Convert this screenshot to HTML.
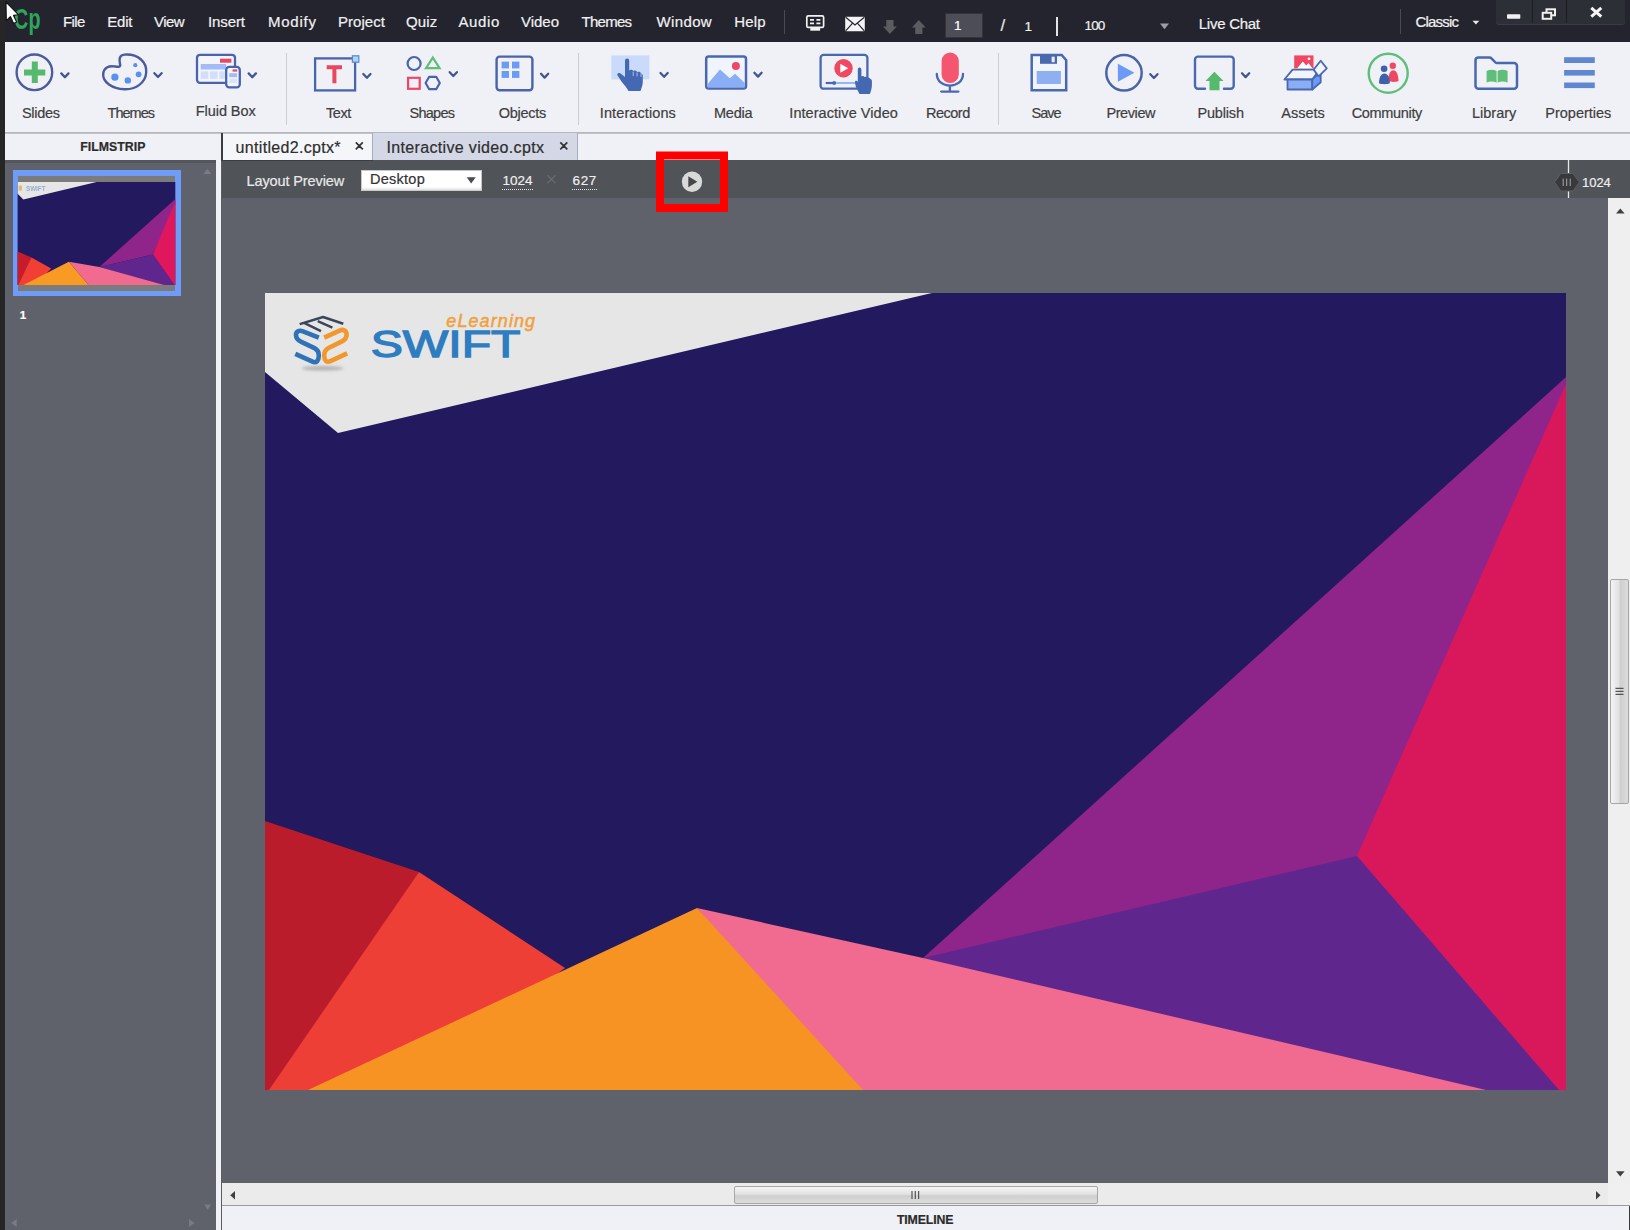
<!DOCTYPE html>
<html><head><meta charset="utf-8"><title>Adobe Captivate - Interactive video.cptx</title>
<style>
html,body{margin:0;padding:0;}
body{width:1630px;height:1230px;position:relative;overflow:hidden;background:#5f626b;font-family:"Liberation Sans","DejaVu Sans",sans-serif;}
.abs{position:absolute;}
.t{position:absolute;white-space:nowrap;line-height:1;-webkit-text-stroke:0.2px;}
svg{position:absolute;overflow:visible;}
#leftstrip{left:0;top:0;width:5px;height:1230px;background:#262626;}
#menubar{left:5px;top:0;width:1625px;height:42px;background:#23242d;}
#toolbar{left:5px;top:42px;width:1625px;height:90px;background:#f0f1f6;}
.tsep{position:absolute;top:53px;width:1px;height:72px;background:#cdced3;}
#tabbar{left:5px;top:134px;width:1625px;height:26px;background:#f0f1f6;}
#tbline{left:5px;top:132px;width:1625px;height:2px;background:linear-gradient(#aeb0b4,#c9cacf);}
#film{left:5px;top:160px;width:211px;height:1070px;background:#5f626b;}
#divider{left:216px;top:160px;width:6px;height:1070px;background:linear-gradient(90deg,#f1f2f7 0,#f1f2f7 5.3px,#5a5d64 5.3px);}
#lpbar{left:222px;top:160px;width:1408px;height:38px;background:#505357;}
#canvas{left:222px;top:198px;width:1386px;height:985px;background:#5f626b;}
#vscroll{left:1608px;top:198px;width:22px;height:985px;background:#efefef;}
#hscroll{left:222px;top:1183px;width:1386px;height:22px;background:#ebebeb;}
#corner{left:1608px;top:1183px;width:22px;height:22px;background:#f0f0f0;}
#timeline{left:222px;top:1206px;width:1408px;height:24px;background:#f0f1f6;}
#tlline{left:222px;top:1205px;width:1408px;height:1px;background:#9a9a9a;}
</style></head><body>
<div id="leftstrip" class="abs"></div>
<div id="menubar" class="abs"></div>
<div id="toolbar" class="abs"></div>
<div id="tbline" class="abs"></div>
<div id="tabbar" class="abs"></div>
<div id="film" class="abs"></div>
<div id="divider" class="abs"></div>
<div id="lpbar" class="abs"></div>
<div id="canvas" class="abs"></div>
<div id="vscroll" class="abs"></div>
<div id="hscroll" class="abs"></div>
<div id="corner" class="abs"></div>
<div id="tlline" class="abs"></div>
<div id="timeline" class="abs"></div>
<!-- SLIDE -->
<svg style="left:265px;top:293px" width="1301" height="797" viewBox="265 293 1301 797">
<defs><g id="slideart">
<rect x="265" y="293" width="1301" height="797" fill="#23195e"/>
<polygon points="265,293 932,293 338,433 265,372" fill="#e6e6e6"/>
<polygon points="923,958 1566,377 1566,395 1362,870 935,966" fill="#8f248a"/>
<polygon points="1566,384 1566,1090 1545,1090 1350,864 1357,856" fill="#d9185c"/>
<polygon points="923,958 1357,856 1559,1090 1470,1090 915,963" fill="#5f278e"/>
<polygon points="697,908 923,958 1486,1090 840,1090" fill="#f06b8f"/>
<polygon points="265,821 419,872 300,1090 265,1090" fill="#bb1c2c"/>
<polygon points="419,872 565,968 400,1090 269,1090" fill="#ee3f36"/>
<polygon points="697,908 863,1090 308,1090" fill="#f69323"/>
</g></defs>
<use href="#slideart"/>
</svg>
<!-- MENU BAR -->
<span class="t" style="left:13.5px;top:4.6px;font-size:29px;font-weight:700;color:#2fa45c;transform-origin:0 0;transform:scaleX(0.68);letter-spacing:0.5px;">Cp</span>
<div class="abs" style="left:945px;top:13px;width:38px;height:25px;background:#4c4d57;border:1px solid #33343b;box-sizing:border-box;"></div>
<div class="abs" style="left:1056px;top:17px;width:2px;height:19px;background:#e4e4e4;"></div>
<div class="abs" style="left:784px;top:10px;width:1px;height:24px;background:#4a4b52;"></div>
<div class="abs" style="left:1400px;top:9px;width:1px;height:25px;background:#4a4b52;"></div>
<div class="abs" style="left:1496px;top:0;width:129px;height:24px;background:#2d2f36;border-radius:0 0 3px 3px;box-shadow:0 1px 0 #3a3c44;"></div>
<div class="abs" style="left:1532px;top:0;width:1px;height:23px;background:#1c1d22;"></div>
<div class="abs" style="left:1566px;top:0;width:1px;height:23px;background:#1c1d22;"></div>
<svg style="left:0;top:0" width="1630" height="42" viewBox="0 0 1630 42">
<!-- cursor -->
<path d="M6,2.200 L6.300,20.600 L10.400,16.600 L13.600,23.400 L16.600,22 L13.500,15.400 L18.600,14.800 Z" fill="#ffffff" stroke="#111" stroke-width="1.100" stroke-linejoin="round"/>
<!-- monitor icon -->
<rect x="806.800" y="15.800" width="16.800" height="11.600" rx="1.500" fill="none" stroke="#f1f1f1" stroke-width="1.700"/>
<path d="M810,19.800H814M816.400,19.800H820.400M810,23.300H814M816.400,23.300H820.400" stroke="#f1f1f1" stroke-width="1.700"/>
<rect x="810.300" y="28" width="9.800" height="2.700" fill="#f1f1f1"/>
<!-- envelope -->
<rect x="845.200" y="16.700" width="19.600" height="14.600" rx="1" fill="#f4f4f4"/>
<path d="M845.700,17.300 L855,25 L864.300,17.300 M845.700,30.800 L852.400,23.400 M864.300,30.800 L857.600,23.400" fill="none" stroke="#23242d" stroke-width="1.200"/>
<!-- arrows -->
<path d="M886.300,20 H893.500 V26.500 H896.800 L889.900,34 L883,26.500 H886.300 Z" fill="#5b5c61"/>
<path d="M915.200,34 H922.400 V27.500 H925.700 L918.800,20 L911.900,27.500 H915.200 Z" fill="#5b5c61"/>
<path d="M1160,23.500 H1169 L1164.500,29.200 Z" fill="#9d9ea3"/>
<path d="M1472.500,20.800 H1479.300 L1475.900,24.500 Z" fill="#e8e8e8"/>
<!-- window buttons -->
<rect x="1507" y="14.300" width="13.300" height="4.500" rx="0.800" fill="#f1f1f1"/>
<g fill="none" stroke="#f1f1f1" stroke-width="2"><rect x="1546.500" y="9.300" width="8.500" height="6"/><rect x="1542.700" y="12.800" width="8.500" height="6" fill="#2c2e35"/></g>
<path d="M1591.300,7.800 L1601.300,16.600 M1601.300,7.800 L1591.300,16.600" stroke="#f4f4f4" stroke-width="3"/>
</svg>
<!-- TOOLBAR ICONS -->
<div class="tsep" style="left:286px"></div>
<div class="tsep" style="left:578px"></div>
<div class="tsep" style="left:998px"></div>
<svg style="left:0;top:42px" width="1630" height="90" viewBox="0 42 1630 90" fill="none" stroke-linecap="round" stroke-linejoin="round">
<defs><path id="chev" d="M-3.6,-2 L0,1.8 L3.6,-2" stroke="#44558f" stroke-width="2.3" fill="none"/></defs>
<!-- Slides -->
<circle cx="34.4" cy="72.3" r="17.8" stroke="#4b5c9c" stroke-width="2.4"/>
<path d="M24,72.4H45.3M34.8,61.6V83.1" stroke="#55ba6d" stroke-width="6" stroke-linecap="butt"/>
<use href="#chev" x="64.9" y="75.4"/>
<!-- Themes -->
<path d="M124.5,54.6 C138,53.6 147,62 146.2,72.5 C145.4,83.5 135,89.6 124.5,89.2 C112,88.7 102.6,82 103.2,74 C103.7,67.5 109,65.8 114,66.4 C117.5,66.8 120.5,67.5 120.2,65 C119.8,62 117.5,55.3 124.5,54.6Z" stroke="#4b5c9c" stroke-width="2.4"/>
<g fill="#5b8ff0" stroke="none"><circle cx="135.3" cy="65.2" r="2.1"/><circle cx="138.6" cy="74.3" r="2.9"/><circle cx="127.8" cy="80.4" r="3.2"/><circle cx="114.9" cy="77.2" r="3.6"/></g>
<use href="#chev" x="158" y="75.2"/>
<!-- Fluid Box -->
<rect x="197" y="54.8" width="38" height="28" rx="3" stroke="#4a63aa" stroke-width="2.3" fill="#f3f5fc"/>
<rect x="220" y="58.7" width="11.4" height="4" fill="#ea4660" stroke="none"/>
<rect x="200.7" y="64" width="25.5" height="5.5" fill="#a3bcf6" stroke="none"/>
<g fill="#d3defa" stroke="none"><rect x="200.7" y="71.4" width="7.6" height="7.4"/><rect x="210" y="71.4" width="7.6" height="7.4"/><rect x="219.3" y="71.4" width="6" height="7.4"/></g>
<rect x="226.2" y="66.9" width="13.6" height="20.4" rx="3" stroke="#4a63aa" stroke-width="2.3" fill="#f3f5fc"/>
<rect x="232.6" y="69.4" width="4.6" height="2.2" fill="#ea4660" stroke="none"/>
<rect x="229.2" y="73.2" width="7.9" height="4" fill="#a3bcf6" stroke="none"/>
<rect x="229.2" y="78.6" width="7.9" height="4.5" fill="#dbe4fa" stroke="none"/>
<use href="#chev" x="252.3" y="75.4"/>
<!-- Text -->
<rect x="315.1" y="58.4" width="40" height="32" stroke="#4a63aa" stroke-width="2.3" stroke-linejoin="miter"/>
<rect x="352.4" y="55.8" width="6.4" height="6.4" fill="#a9d5f6" stroke="#5c86c6" stroke-width="1.2" stroke-linejoin="miter"/>
<path d="M326.7,67.2H342M334.4,67.2V83.3" stroke="#ea4660" stroke-width="4" stroke-linecap="butt"/>
<use href="#chev" x="366.9" y="76"/>
<!-- Shapes -->
<circle cx="414.1" cy="63.5" r="6.5" stroke="#4a63aa" stroke-width="2.2"/>
<path d="M432.8,57.6 L439.6,68.2 H426 Z" stroke="#5fbe7a" stroke-width="2.2" stroke-linejoin="miter"/>
<rect x="408.1" y="77.8" width="11.6" height="11" stroke="#ee4668" stroke-width="2.2" stroke-linejoin="miter"/>
<path d="M425.6,83 L429.2,76.8 H436.2 L439.8,83 L436.2,89.2 H429.2 Z" stroke="#4a63aa" stroke-width="2.2"/>
<use href="#chev" x="453.3" y="74.2"/>
<!-- Objects -->
<rect x="496.6" y="56.6" width="35.8" height="33.6" rx="3" stroke="#4a63aa" stroke-width="2.4"/>
<g fill="#6b9bf6" stroke="none"><rect x="501.6" y="61.6" width="7.4" height="6.8"/><rect x="512" y="61.6" width="7.4" height="6.8"/><rect x="501.6" y="71" width="7.4" height="6.9"/><rect x="512" y="71" width="7.4" height="6.9"/></g>
<use href="#chev" x="544.6" y="75.8"/>
<!-- Interactions -->
<rect x="611.4" y="55.4" width="38" height="24" fill="#c9dafa" stroke="none"/>
<path d="M625,60.5 a2.1,2.1 0 0 1 4.2,0 V70.5 c1.2,-1.2 3.4,-1 4,0.6 c1.2,-1 3.4,-0.6 3.9,1 c1.3,-0.9 3.6,-0.3 3.9,1.5 c1,0.2 1.8,1 1.8,2.4 V81.5 c0,4.5 -1.5,6.5 -2.3,9.5 H628.5 c-1.5,-3.2 -4.5,-6 -7,-9.5 L617.6,75.6 c-1,-1.6 0.6,-3.4 2.6,-2.4 L625,77 Z" fill="#4469b2" stroke="none"/>
<path d="M633.2,71.6 V76 M637.1,72.4 V76.4 M641,73.4 V77" stroke="#c4d4f4" stroke-width="0.8" stroke-linecap="butt"/>
<use href="#chev" x="664.1" y="75"/>
<!-- Media -->
<rect x="706.2" y="56.6" width="39.8" height="32" rx="2.5" stroke="#4a68b0" stroke-width="2.5" fill="#f0f4fd"/>
<path d="M707.6,87.4 V84 L720,69.5 L729.8,78.3 L735,73.8 L744.8,83 V87.4 Z" fill="#8aaef6" stroke="none"/>
<circle cx="735.9" cy="65.9" r="4" fill="#ee4668" stroke="none"/>
<use href="#chev" x="758" y="74.8"/>
<!-- Interactive Video -->
<rect x="820.6" y="54.9" width="46.8" height="33.8" rx="3" stroke="#4a68b0" stroke-width="2.3"/>
<circle cx="843.5" cy="68.3" r="9.2" fill="#ee4862" stroke="none"/>
<path d="M840.3,63.8 L848.3,68.3 L840.3,72.8 Z" fill="#ffffff" stroke="none"/>
<path d="M835,83 H856" stroke="#8aaef6" stroke-width="1.8" stroke-linecap="butt"/>
<path d="M825.7,83 H834" stroke="#4a68b0" stroke-width="2.2" stroke-linecap="butt"/>
<circle cx="834.2" cy="83" r="1.9" fill="#4a68b0" stroke="none"/>
<path d="M857.8,69.4 a1.8,1.8 0 0 1 3.6,0 V76.5 c1,-0.8 2.6,-0.6 3.1,0.6 c1,-0.7 2.6,-0.4 3,0.8 c1,-0.6 2.7,-0.1 3,1.2 c0.8,0.2 1.4,0.9 1.4,2 V85 c0,4 -1.2,6 -2,9 H859.5 c-1,-2.6 -2.7,-4.6 -3.8,-7.8 L855,82.5 c-0.3,-1.4 1.2,-2.2 2.2,-1.2 L857.8,82 Z" fill="#4469b2" stroke="none"/>
<!-- Record -->
<rect x="941.6" y="52.4" width="17.2" height="30.6" rx="8.6" fill="#f5566f" stroke="none"/>
<path d="M936.8,74 c0,15.4 26.2,15.4 26.2,0 M949.9,85.6 V91.5 M941.2,91.6 H958.4" stroke="#4a68b0" stroke-width="2.3"/>
<!-- Save -->
<path d="M1031.7,55 H1061.7 L1066.2,60.3 V90.2 H1031.7 Z" stroke="#4a68b0" stroke-width="2.5" fill="#f0f4fd" stroke-linejoin="miter"/>
<rect x="1040" y="55" width="17" height="8.8" fill="#4a68b0" stroke="none"/>
<rect x="1051.6" y="56.7" width="3.1" height="5.5" fill="#e8eefb" stroke="none"/>
<rect x="1036.7" y="71" width="24.2" height="13" fill="#8eaff0" stroke="none"/>
<!-- Preview -->
<circle cx="1124" cy="72.8" r="17.7" stroke="#4b64a8" stroke-width="2.5"/>
<path d="M1117.9,63.7 L1134.4,72.7 L1117.9,81.8 Z" fill="#6b9bf6" stroke="none"/>
<use href="#chev" x="1153.9" y="76.2"/>
<!-- Publish -->
<path d="M1205,88.7 H1198 a3,3 0 0 1 -3,-3 V59.6 a3,3 0 0 1 3,-3 H1230.700 a3,3 0 0 1 3,3 V85.700 a3,3 0 0 1 -3,3 H1224" stroke="#4a68b0" stroke-width="2.4"/>
<path d="M1214.4,71.8 L1223.500,81 H1219.500 V90.300 H1209.500 V81 H1205.500 Z" fill="#55ba6d" stroke="none"/>
<use href="#chev" x="1245.6" y="75.3"/>
<!-- Assets -->
<rect x="1294.2" y="55.4" width="19.3" height="13" fill="#ee4862" stroke="none"/>
<path d="M1297,68.4 L1302.8,61.5 L1306.2,65.5 L1308.5,63 L1312.5,68.4 Z" fill="#ffffff" stroke="none"/>
<circle cx="1309" cy="58.8" r="1.4" fill="#ffffff" stroke="none"/>
<path d="M1284.4,79.5 L1292.6,69.6 H1319.5 L1312.3,79.5 Z" fill="#f0f4fd" stroke="#4a68b0" stroke-width="1.8"/>
<path d="M1287.5,79.5 H1312.3 V89.5 H1287.5 Z" fill="#8aaef6" stroke="#4a68b0" stroke-width="1.8"/>
<path d="M1312.3,79.5 L1320.7,71.5 V82.3 L1312.3,89.5 Z" fill="#6b9bf6" stroke="#4a68b0" stroke-width="1.8"/>
<path d="M1313.6,69.6 L1320.7,60.8 L1326.8,68.4 L1318.6,76.4 Z" fill="#f0f4fd" stroke="#4a68b0" stroke-width="1.8"/>
<!-- Community -->
<circle cx="1388.200" cy="73.200" r="19.500" stroke="#5fbe7a" stroke-width="2.400"/>
<g fill="#ee4862" stroke="none"><circle cx="1392.800" cy="65.700" r="3.200"/><path d="M1388.200,81 c0,-6 2,-10.700 5.100,-10.700 c3.200,0 5.200,4.700 5.200,10.700 c-2.500,1.200 -7.800,1.200 -10.300,0 Z"/></g>
<g fill="#3f60aa" stroke="none"><circle cx="1384.100" cy="68.800" r="3.300"/><path d="M1379,83.300 c0,-6 2,-9.900 5.400,-9.900 c3.400,0 5.400,3.900 5.400,9.900 c-2.500,1.200 -8.300,1.200 -10.800,0 Z"/></g>
<!-- Library -->
<path d="M1478,57.600 H1489.500 a3,3 0 0 1 2.200,1 L1495.500,62.500 a2,2 0 0 0 1.500,0.600 H1514 a3,3 0 0 1 3,3 V85.700 a3,3 0 0 1 -3,3 H1478.500 a3,3 0 0 1 -3,-3 V60.600 a3,3 0 0 1 2.500,-3 Z" stroke="#4a68b0" stroke-width="2.500"/>
<path d="M1486.600,71 c3,-1.600 7,-1.600 10,0 V82.500 c-3,-1.300 -7,-1.300 -10,0 Z M1497.600,71 c3,-1.600 7,-1.600 10,0 V82.500 c-3,-1.300 -7,-1.300 -10,0 Z" fill="#5fbe7a" stroke="none"/>
<!-- Properties -->
<g fill="#6088d2" stroke="none"><rect x="1564.100" y="57.200" width="30.700" height="5.800"/><rect x="1564.100" y="70" width="30.700" height="5.600"/><rect x="1564.100" y="82.500" width="30.700" height="5.600"/></g>
</svg>
<!-- TABS -->
<div class="abs" style="left:221px;top:133px;width:2px;height:28px;background:#3c3d42;"></div>
<div class="abs" style="left:223px;top:134px;width:149px;height:26px;background:#f5f6fa;"></div>
<div class="abs" style="left:221px;top:159.500px;width:152px;height:1.500px;background:#3c3d42;"></div>
<div class="abs" style="left:372px;top:133px;width:1px;height:27px;background:#a9adbb;"></div>
<div class="abs" style="left:373px;top:133px;width:204px;height:27px;background:#d3d7e6;"></div>
<div class="abs" style="left:577px;top:133px;width:1px;height:27px;background:#a9adbb;"></div>
<svg style="left:0;top:133px" width="700" height="27" viewBox="0 133 700 27">
<path d="M355.800,142.300 L362.800,149.300 M362.800,142.300 L355.800,149.300 M560.300,142.300 L567.300,149.300 M567.300,142.300 L560.300,149.300" stroke="#333" stroke-width="1.700"/>
</svg>
<!-- FILMSTRIP -->
<div class="abs" style="left:5px;top:160px;width:211px;height:3px;background:#54565d;"></div>
<div class="abs" style="left:13px;top:170px;width:168px;height:126px;background:#6f9cf6;"></div>
<div class="abs" style="left:18px;top:176px;width:157px;height:115px;background:#7b7b7b;"></div>
<svg style="left:0;top:160px" width="222" height="140" viewBox="0 160 222 140">
<rect x="17.6" y="182" width="157.7" height="103" fill="#23195e"/>
<polygon points="17.6,182 96.6,182 23.4,199.6 17.6,193.8" fill="#e6e6e6"/>
<polygon points="99.5,266.9 175.3,198.9 175.3,205 152.9,254.5" fill="#8f248a"/>
<polygon points="175.3,201 175.3,285 174.3,285 152.9,254.5" fill="#e0175c"/>
<polygon points="99.5,266.9 152.9,254.500 174.500,285 163,285" fill="#5f278e"/>
<polygon points="68.8,261.8 99.5,266.9 164,285 88.5,285" fill="#f06b8f"/>
<polygon points="17.6,251.6 31.5,257.4 22,285 17.6,285" fill="#c61c2c"/>
<polygon points="31.5,257.4 51.2,268.4 35,285 18.4,285" fill="#f23f36"/>
<polygon points="68.8,261.8 88.5,285 23.4,285" fill="#f89a23"/>
<rect x="18.6" y="185.6" width="3.4" height="5" fill="#d9b36a" opacity="0.85"/>
<text x="26" y="190.800" font-family="'Liberation Sans',sans-serif" font-size="6.500" font-weight="700" fill="#8aa8c8" textLength="19.500" lengthAdjust="spacingAndGlyphs" opacity="0.9">SWIFT</text>
</svg>
<svg style="left:0;top:160px" width="222" height="1070" viewBox="0 160 222 1070">
<path d="M203.400,174 L207.400,169 L211.400,174 Z" fill="#7a7d86"/>
<path d="M204.400,1204.600 H211 L207.700,1210 Z" fill="#787b86"/>
<path d="M16.700,1219 V1227 L11,1223 Z" fill="#787b86"/>
<path d="M189,1219 V1227 L194.600,1223 Z" fill="#787b86"/>
</svg>
<!-- LAYOUT PREVIEW BAR -->
<div class="abs" style="left:361px;top:170px;width:121px;height:21px;background:#ffffff;border:1px solid #c8c8c8;box-sizing:border-box;box-shadow:inset 0 -3px 3px -2px #d8d8d8;"></div>
<div class="abs" style="left:502px;top:188.500px;width:31px;height:0;border-top:1px dotted #e4e4e4;"></div>
<div class="abs" style="left:572px;top:188.500px;width:25px;height:0;border-top:1px dotted #e4e4e4;"></div>
<svg style="left:222px;top:150px" width="1408" height="70" viewBox="222 150 1408 70">
<path d="M466.700,177.200 H475.700 L471.200,183.400 Z" fill="#4a4a55"/>
<path d="M547.500,175.300 L555.500,183.300 M555.500,175.300 L547.500,183.300" stroke="#686b70" stroke-width="1.300"/>
<circle cx="692" cy="181.700" r="10.200" fill="#d9d9d9"/>
<path d="M688.300,176.200 L697.300,181.700 L688.300,187.200 Z" fill="#45474b"/>
<rect x="660" y="155.500" width="64" height="52.500" fill="none" stroke="#ff0000" stroke-width="8"/>
<path d="M1568.500,160 V198" stroke="#e8e8e8" stroke-width="1.300"/>
<path d="M1554.500,182.200 L1560.800,173.500 H1573 L1579.300,182.200 L1573,191 H1560.800 Z" fill="#37393d" stroke="#5c5e63" stroke-width="1"/>
<path d="M1563.200,178.600 V186 M1566.700,178.600 V186 M1570.200,178.600 V186" stroke="#a8a8a8" stroke-width="1"/>
</svg>
<!-- SCROLLBARS -->
<div class="abs" style="left:1610px;top:579px;width:19px;height:225px;box-sizing:border-box;border:1px solid #a6a6a6;border-radius:2px;background:linear-gradient(90deg,#f4f4f4 0%,#e2e2e2 45%,#cfcfcf 55%,#dcdcdc 100%);"></div>
<div class="abs" style="left:734px;top:1186px;width:364px;height:18px;box-sizing:border-box;border:1px solid #a6a6a6;border-radius:2px;background:linear-gradient(180deg,#f4f4f4 0%,#e2e2e2 45%,#cfcfcf 55%,#dcdcdc 100%);"></div>
<div class="abs" style="left:1629px;top:1206px;width:1px;height:24px;background:#3a3a3a;"></div>
<svg style="left:222px;top:198px" width="1408" height="1032" viewBox="222 198 1408 1032">
<path d="M1616,213.600 L1620.300,208.600 L1624.600,213.600 Z" fill="#404040"/>
<path d="M1616,1171.200 H1624.600 L1620.300,1176.400 Z" fill="#404040"/>
<path d="M235,1191 V1199.600 L230.200,1195.300 Z" fill="#404040"/>
<path d="M1596,1191 V1199.600 L1600.500,1195.300 Z" fill="#404040"/>
<path d="M912,1191 V1199 M915.300,1191 V1199 M918.600,1191 V1199" stroke="#555" stroke-width="1.200"/>
<path d="M1615.500,688.300 H1623.500 M1615.500,691.300 H1623.500 M1615.500,694.300 H1623.500" stroke="#555" stroke-width="1.200"/>
</svg>
<!-- LOGO -->
<svg style="left:280px;top:300px" width="280" height="85" viewBox="280 300 280 85">
<defs><filter id="blr" x="-20%" y="-200%" width="140%" height="500%"><feGaussianBlur stdDeviation="1.6"/></filter></defs>
<ellipse cx="322.600" cy="368.300" rx="21" ry="2.300" fill="#b4b4b4" filter="url(#blr)"/>
<g fill="none" stroke-linecap="butt" stroke-linejoin="round">
<path d="M318.800,337.600 L303,331.400 C299,329.800 296,331.600 296,335 C296,338.400 298,340.400 301.300,341.800 L314,347.800 C317.500,349.400 318.800,351.600 318.800,355.500 C318.800,360.500 316.500,363.500 312.500,361.700 L295.300,353.800" stroke="#2f72b8" stroke-width="4.600"/>
<path d="M324.200,337.600 L339.500,330.600 C343.500,328.800 346.600,330.600 346.600,334.600 C346.600,338.400 344.800,340 342,341.400 L329,347.800 C325.500,349.500 324.200,351.800 324.200,355.500 C324.200,360.500 326.500,363 330.500,361.200 L347.100,353.400" stroke="#f2972b" stroke-width="4.600"/>
<path d="M299.700,324.100 L323.100,317 L343.300,323.800 M304.600,323.200 L321,331.200 M317.700,321.200 L332.400,327.700" stroke="#3b4759" stroke-width="2.500"/>
</g>
<text x="370.700" y="356.700" font-family="'Liberation Sans','DejaVu Sans',sans-serif" font-size="36.500" fill="#2e7dc1" stroke="#2e7dc1" stroke-width="1.3" textLength="149.800" lengthAdjust="spacingAndGlyphs">SWIFT</text>
<text x="446.300" y="327.100" font-family="'Liberation Sans','DejaVu Sans',sans-serif" font-style="italic" font-size="18" fill="#f0a13e" stroke="#f0a13e" stroke-width="0.5" textLength="88.800" lengthAdjust="spacing">eLearning</text>
</svg>

<!--TEXT-->
<span class="t" style="left:63.0px;top:13.9px;font-size:15px;color:#f1f1f1;letter-spacing:-0.59px;">File</span>
<span class="t" style="left:107.2px;top:13.9px;font-size:15px;color:#f1f1f1;letter-spacing:-0.19px;">Edit</span>
<span class="t" style="left:154.0px;top:13.9px;font-size:15px;color:#f1f1f1;letter-spacing:-0.58px;">View</span>
<span class="t" style="left:208.0px;top:13.9px;font-size:15px;color:#f1f1f1;letter-spacing:-0.10px;">Insert</span>
<span class="t" style="left:268.0px;top:13.9px;font-size:15px;color:#f1f1f1;letter-spacing:0.76px;">Modify</span>
<span class="t" style="left:338.0px;top:13.9px;font-size:15px;color:#f1f1f1;letter-spacing:0.05px;">Project</span>
<span class="t" style="left:406.0px;top:13.9px;font-size:15px;color:#f1f1f1;letter-spacing:0.15px;">Quiz</span>
<span class="t" style="left:458.4px;top:13.9px;font-size:15px;color:#f1f1f1;letter-spacing:0.66px;">Audio</span>
<span class="t" style="left:521.0px;top:13.9px;font-size:15px;color:#f1f1f1;letter-spacing:-0.02px;">Video</span>
<span class="t" style="left:581.6px;top:13.9px;font-size:15px;color:#f1f1f1;letter-spacing:-0.76px;">Themes</span>
<span class="t" style="left:656.4px;top:13.9px;font-size:15px;color:#f1f1f1;letter-spacing:0.39px;">Window</span>
<span class="t" style="left:734.2px;top:13.9px;font-size:15px;color:#f1f1f1;letter-spacing:0.18px;">Help</span>
<span class="t" style="left:1198.8px;top:15.7px;font-size:15px;color:#f1f1f1;letter-spacing:-0.27px;">Live Chat</span>
<span class="t" style="left:1415.5px;top:13.5px;font-size:15px;color:#f1f1f1;letter-spacing:-0.81px;">Classic</span>
<span class="t" style="left:954.0px;top:19.3px;font-size:13.5px;color:#ffffff;letter-spacing:0.00px;">1</span>
<span class="t" style="left:1000.5px;top:17.1px;font-size:17px;color:#e8e8e8;letter-spacing:0.00px;">/</span>
<span class="t" style="left:1024.4px;top:19.8px;font-size:13.5px;color:#f1f1f1;letter-spacing:0.00px;">1</span>
<span class="t" style="left:1084.5px;top:19.3px;font-size:13.5px;color:#f1f1f1;letter-spacing:-0.87px;">100</span>
<span class="t" style="left:22.0px;top:106.1px;font-size:14.5px;color:#3e3e3e;letter-spacing:-0.30px;">Slides</span>
<span class="t" style="left:107.5px;top:106.1px;font-size:14.5px;color:#3e3e3e;letter-spacing:-0.98px;">Themes</span>
<span class="t" style="left:195.8px;top:103.6px;font-size:14.5px;color:#3e3e3e;letter-spacing:-0.07px;">Fluid Box</span>
<span class="t" style="left:325.9px;top:106.1px;font-size:14.5px;color:#3e3e3e;letter-spacing:-0.36px;">Text</span>
<span class="t" style="left:409.6px;top:106.1px;font-size:14.5px;color:#3e3e3e;letter-spacing:-0.76px;">Shapes</span>
<span class="t" style="left:498.7px;top:106.1px;font-size:14.5px;color:#3e3e3e;letter-spacing:-0.26px;">Objects</span>
<span class="t" style="left:599.8px;top:106.1px;font-size:14.5px;color:#3e3e3e;letter-spacing:0.10px;">Interactions</span>
<span class="t" style="left:714.0px;top:106.1px;font-size:14.5px;color:#3e3e3e;letter-spacing:-0.25px;">Media</span>
<span class="t" style="left:789.3px;top:106.1px;font-size:14.5px;color:#3e3e3e;letter-spacing:0.05px;">Interactive Video</span>
<span class="t" style="left:926.0px;top:106.1px;font-size:14.5px;color:#3e3e3e;letter-spacing:-0.51px;">Record</span>
<span class="t" style="left:1031.5px;top:106.1px;font-size:14.5px;color:#3e3e3e;letter-spacing:-1.00px;">Save</span>
<span class="t" style="left:1106.4px;top:106.1px;font-size:14.5px;color:#3e3e3e;letter-spacing:-0.41px;">Preview</span>
<span class="t" style="left:1197.4px;top:106.1px;font-size:14.5px;color:#3e3e3e;letter-spacing:-0.16px;">Publish</span>
<span class="t" style="left:1281.3px;top:106.1px;font-size:14.5px;color:#3e3e3e;letter-spacing:-0.02px;">Assets</span>
<span class="t" style="left:1351.7px;top:106.1px;font-size:14.5px;color:#3e3e3e;letter-spacing:-0.33px;">Community</span>
<span class="t" style="left:1472.0px;top:106.1px;font-size:14.5px;color:#3e3e3e;letter-spacing:-0.00px;">Library</span>
<span class="t" style="left:1545.3px;top:106.1px;font-size:14.5px;color:#3e3e3e;letter-spacing:-0.01px;">Properties</span>
<span class="t" style="left:80.2px;top:140.8px;font-size:12.3px;color:#2b2b2b;letter-spacing:0.04px;font-weight:700;">FILMSTRIP</span>
<span class="t" style="left:235.6px;top:139.5px;font-size:16px;color:#2e2e2e;letter-spacing:0.31px;">untitled2.cptx*</span>
<span class="t" style="left:386.5px;top:139.5px;font-size:16px;color:#2e2e2e;letter-spacing:0.34px;">Interactive video.cptx</span>
<span class="t" style="left:246.6px;top:173.9px;font-size:14.5px;color:#e9e9e9;letter-spacing:-0.12px;">Layout Preview</span>
<span class="t" style="left:370.0px;top:172.1px;font-size:14.5px;color:#333333;letter-spacing:0.25px;">Desktop</span>
<span class="t" style="left:502.5px;top:174.3px;font-size:13.5px;color:#efefef;letter-spacing:0.02px;">1024</span>
<span class="t" style="left:572.6px;top:174.3px;font-size:13.5px;color:#efefef;letter-spacing:0.63px;">627</span>
<span class="t" style="left:1582.0px;top:175.8px;font-size:13px;color:#efefef;letter-spacing:-0.04px;">1024</span>
<span class="t" style="left:19.8px;top:309.9px;font-size:11.5px;color:#ffffff;letter-spacing:0.00px;font-weight:700;">1</span>
<span class="t" style="left:896.9px;top:1214.1px;font-size:12.3px;color:#2b2b2b;letter-spacing:-0.11px;font-weight:700;">TIMELINE</span>
</body></html>
